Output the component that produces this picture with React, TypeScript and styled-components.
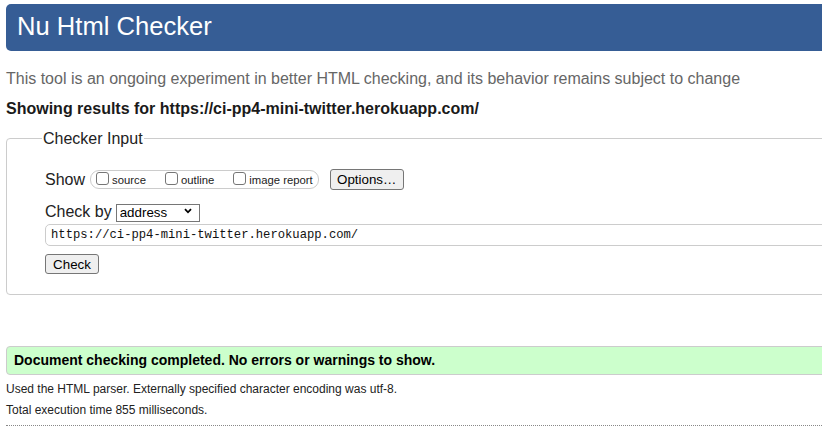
import React from "react";
import styled, { createGlobalStyle } from "styled-components";

const Global = createGlobalStyle`
  html, body { margin: 0; padding: 0; background: #fff; }
  body {
    overflow: hidden;
    font-family: "Liberation Sans", Arial, sans-serif;
    color: #222;
  }
`;

const Page = styled.div`
  width: 900px;
  padding: 4px 0 0 6px;
  display: flex;
  flex-direction: column;
`;

const Header = styled.h1`
  margin: 0;
  height: 47px;
  box-sizing: border-box;
  padding: 0 0 3px 11px;
  background: #365d95;
  color: #fff;
  border-radius: 5px;
  font-size: 25.6px;
  font-weight: normal;
  line-height: 44px;
`;

const Intro = styled.p`
  margin: 18.5px 0 0;
  font-size: 16px;
  line-height: 18px;
  color: #666;
`;

const Results = styled.p`
  margin: 12px 0 0;
  font-size: 16px;
  line-height: 18px;
  font-weight: bold;
  color: #1a1a1a;
`;

const Fieldset = styled.fieldset`
  margin: 12px 0 0;
  padding: 0 0 20px 38px;
  border: 1px solid #cccccc;
  border-radius: 4px;
  display: flex;
  flex-direction: column;
  min-width: 0;
`;

const Legend = styled.legend`
  margin-left: -3px;
  padding: 0 1px;
  font-size: 16px;
  line-height: 18px;
  color: #222;
`;

const Row = styled.div<{ $top: number }>`
  display: flex;
  align-items: center;
  margin-top: ${(p) => p.$top}px;
`;

const Label = styled.span`
  font-size: 16px;
  line-height: 18px;
`;

const Group = styled.div`
  margin-left: 5px;
  height: 19px;
  box-sizing: border-box;
  border: 1px solid #cccccc;
  border-radius: 9px;
  padding: 0 5px;
  display: flex;
  align-items: center;
  gap: 19px;
`;

const CheckItem = styled.label`
  display: flex;
  align-items: center;
  gap: 3px;
  font-size: 11.3px;
  line-height: 13px;
  padding-top: 1px;
  color: #222;
`;

const Box = styled.input`
  appearance: none;
  margin: 0 0 4px;
  width: 13px;
  height: 13px;
  box-sizing: border-box;
  border: 1px solid #767676;
  border-radius: 3px;
  background: #fff;
`;

const Button = styled.button<{ $w: number; $h: number; $ml?: number }>`
  margin: 0 0 0 ${(p) => p.$ml ?? 0}px;
  width: ${(p) => p.$w}px;
  height: ${(p) => p.$h}px;
  padding: 0;
  box-sizing: border-box;
  border: 1px solid #767676;
  border-radius: 3px;
  background: #efefef;
  font-family: "Liberation Sans", Arial, sans-serif;
  font-size: 13.33px;
  color: #000;
`;

const SelectWrap = styled.div`
  position: relative;
  margin-left: 4px;
  width: 84px;
  height: 18px;
`;

const Select = styled.select`
  appearance: none;
  width: 100%;
  height: 100%;
  margin: 0;
  padding: 0 0 0 3px;
  box-sizing: border-box;
  border: 1px solid #767676;
  border-radius: 0;
  background: #fff;
  font-family: "Liberation Sans", Arial, sans-serif;
  font-size: 13.33px;
  color: #000;
`;

const Chevron = styled.svg`
  position: absolute;
  right: 8px;
  top: 5px;
  width: 8px;
  height: 6px;
  pointer-events: none;
`;

const UrlInput = styled.input`
  flex: 1;
  height: 22px;
  margin: 0;
  padding: 0 5px;
  box-sizing: border-box;
  border: 1px solid #cccccc;
  border-radius: 5px;
  font-family: "Liberation Mono", "DejaVu Sans Mono", monospace;
  font-size: 12.2px;
  color: #111;
  background: #fff;
`;

const Success = styled.div`
  margin-top: 50.5px;
  border: 1px solid #cccccc;
  border-radius: 4px;
  background: #ccffcc;
  padding: 6px 7px;
  font-size: 14px;
  line-height: 15px;
  font-weight: bold;
  color: #000;
`;

const Detail = styled.p<{ $top: number }>`
  margin: ${(p) => p.$top}px 0 0;
  font-size: 12px;
  line-height: 14px;
  color: #222;
`;

const Rule = styled.hr`
  margin: 8px 0 0;
  border: 0;
  border-top: 1px dotted #888;
  height: 0;
`;

export default function App() {
  return (
    <>
      <Global />
      <Page>
        <Header>Nu Html Checker</Header>
        <Intro>
          This tool is an ongoing experiment in better HTML checking, and its
          behavior remains subject to change
        </Intro>
        <Results>
          Showing results for https://ci-pp4-mini-twitter.herokuapp.com/
        </Results>
        <Fieldset>
          <Legend>Checker Input</Legend>
          <Row $top={21.5}>
            <Label>Show</Label>
            <Group>
              <CheckItem>
                <Box type="checkbox" />
                source
              </CheckItem>
              <CheckItem>
                <Box type="checkbox" />
                outline
              </CheckItem>
              <CheckItem>
                <Box type="checkbox" />
                image report
              </CheckItem>
            </Group>
            <Button $w={74} $h={21} $ml={11}>
              Options…
            </Button>
          </Row>
          <Row $top={13}>
            <Label>Check by</Label>
            <SelectWrap>
              <Select defaultValue="address">
                <option value="address">address</option>
                <option value="file">file upload</option>
                <option value="text">text input</option>
              </Select>
              <Chevron viewBox="0 0 8 6">
                <path
                  d="M1 1.2 L4 4.3 L7 1.2"
                  fill="none"
                  stroke="#000"
                  strokeWidth="1.8"
                />
              </Chevron>
            </SelectWrap>
          </Row>
          <Row $top={3}>
            <UrlInput
              type="url"
              defaultValue="https://ci-pp4-mini-twitter.herokuapp.com/"
            />
          </Row>
          <Row $top={8}>
            <Button $w={54} $h={20}>
              Check
            </Button>
          </Row>
        </Fieldset>
        <Success>
          Document checking completed. No errors or warnings to show.
        </Success>
        <Detail $top={7}>
          Used the HTML parser. Externally specified character encoding was
          utf-8.
        </Detail>
        <Detail $top={7}>Total execution time 855 milliseconds.</Detail>
        <Rule />
      </Page>
    </>
  );
}
